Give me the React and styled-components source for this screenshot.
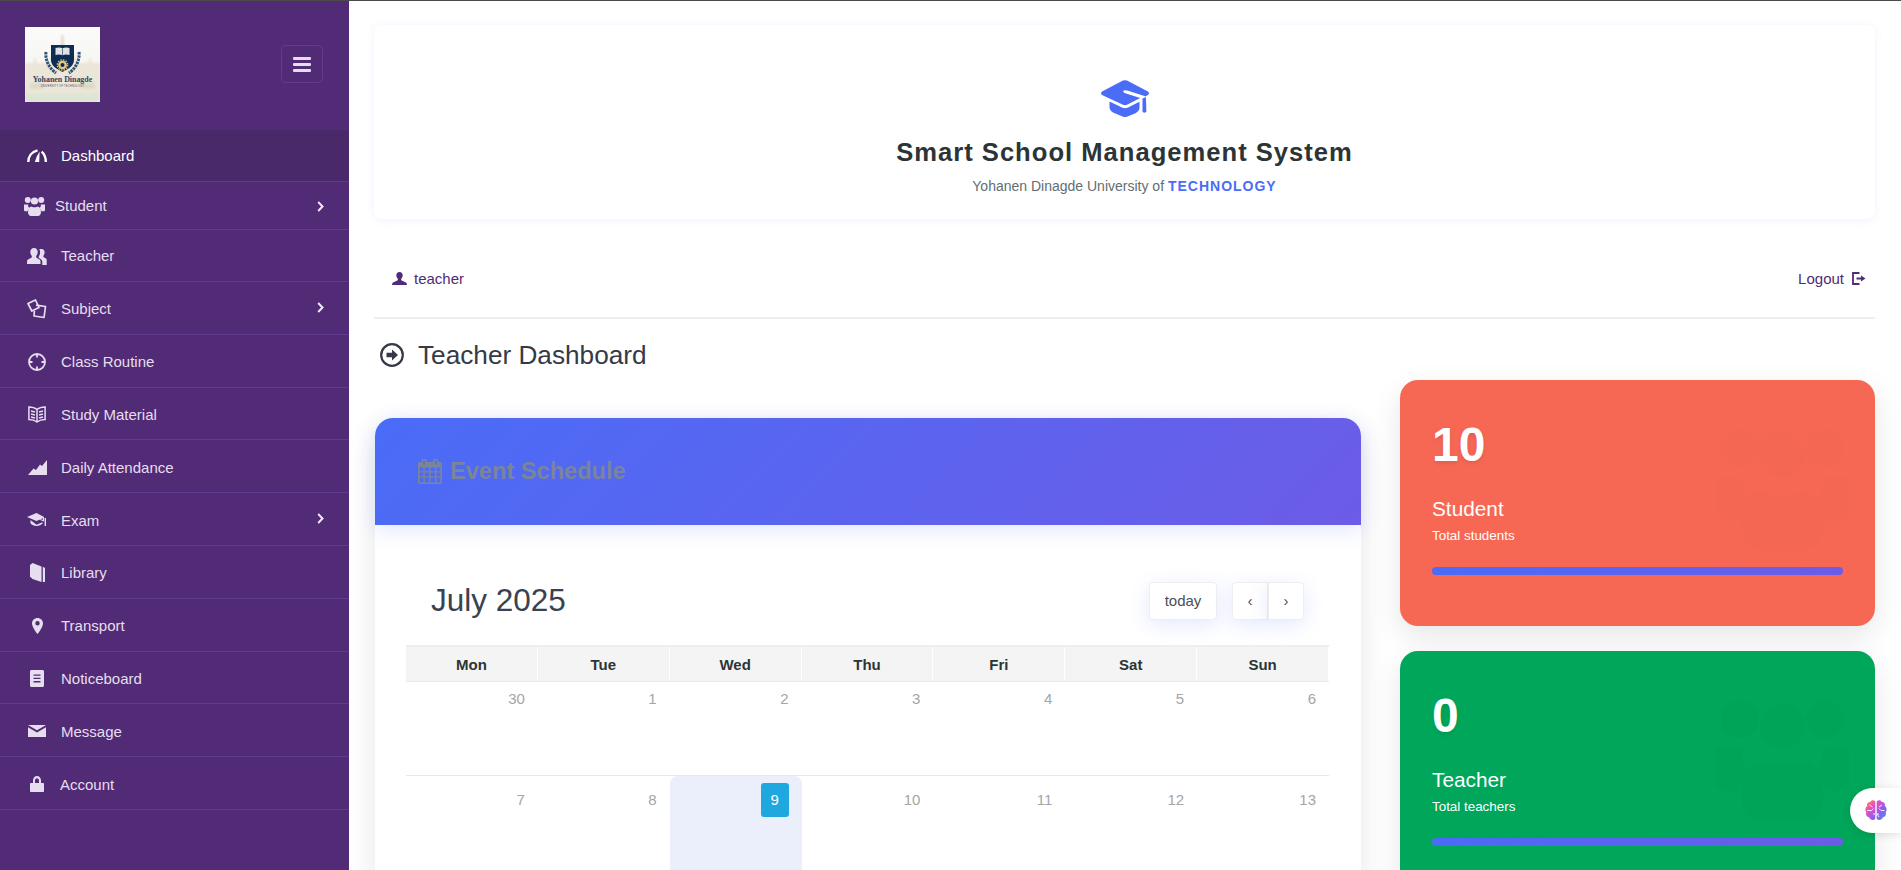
import React from "react";
import styled, { createGlobalStyle } from "styled-components";

const Global = createGlobalStyle`
  html, body { margin: 0; padding: 0; background: #fff; }
  body { font-family: "Liberation Sans", Arial, sans-serif; overflow: hidden; }
  * { box-sizing: border-box; }
`;

const Page = styled.div`
  display: flex; width: 1901px; height: 870px; overflow: hidden;
  border-top: 1px solid #4a4a4a; position: relative; background: #fff;
`;
const Sidebar = styled.aside`
  width: 349px; flex: none; background: #522b76; display: flex; flex-direction: column;
`;
const Brand = styled.div`
  height: 129px; flex: none; display: flex; align-items: flex-start; justify-content: space-between;
  padding: 26px 26px 0 25px; border-bottom: 1px solid #4b3468;
`;
const Logo = styled.svg`width: 75px; height: 75px; display: block;`;
const Toggle = styled.button`
  width: 42px; height: 38px; margin-top: 18px; background: transparent; border: 1px solid #633c8a; border-radius: 4px;
  padding: 0; display: flex; flex-direction: column; align-items: center; justify-content: center; gap: 3px;
`;
const ToggleBar = styled.span`width: 18px; height: 3px; border-radius: 1px; background: #e6deef;`;
const Menu = styled.nav`display: flex; flex-direction: column;`;
const Row = styled.div`
  display: flex; align-items: center; height: ${p => p.$h}px; flex: none;
  padding: ${p => p.$nudge}px 25px 0 ${p => p.$pad}px; gap: ${p => p.$gap}px;
  border-bottom: 1px solid #603a8c;
  background: ${p => p.$active ? "#49296a" : "transparent"};
  color: ${p => p.$active ? "#fff" : "#e6deef"};
  font-size: 15px;
`;
const RowIcon = styled.span`
  width: ${p => p.$w}px; flex: none; display: flex; justify-content: center; align-items: center;
`;
const RowLabel = styled.span`flex: 1;`;
const Chevron = styled.svg`width: 7px; height: 11px; display: block; margin-top: ${p => p.$mt}px;`;

const Main = styled.main`flex: 1; padding: 24px 26px 0 25px; display: flex; flex-direction: column; min-width: 0;`;
const Banner = styled.header`
  height: 194px; flex: none; border-radius: 8px; background: #fff; box-shadow: 0 1px 8px rgba(74,108,247,.09);
  display: flex; flex-direction: column; align-items: center; padding-top: 55px;
`;
const CapIcon = styled.svg`width: 48px; height: 37px; display: block; color: #4a6cf7;`;
const BannerTitle = styled.h1`
  margin: 20px 0 0; font-size: 25.6px; line-height: 30px; font-weight: 700; letter-spacing: 1px; color: #2d3436;
`;
const BannerSub = styled.p`margin: 10px 0 0; font-size: 14px; line-height: 18px; color: #636e72;`;
const Tech = styled.span`color: #4a6cf7; font-weight: 700; letter-spacing: 1px;`;
const UserBar = styled.div`
  height: 100px; flex: none; display: flex; align-items: center; justify-content: space-between;
  padding: 20px 9px 0 18px; border-bottom: 2px solid #eeeeee; color: #522b76; font-size: 15px;
`;
const UserBit = styled.div`display: flex; align-items: center; gap: ${p => p.$gap}px;`;
const PageTitle = styled.h2`
  margin: 0; height: 61px; flex: none; display: flex; align-items: center; gap: 14px; padding: 11px 0 0 6px;
  font-size: 26.2px; font-weight: 400; color: #343a46;
`;
const Columns = styled.div`display: grid; grid-template-columns: 987px 475px; column-gap: 39px; align-items: start;`;
const EventCard = styled.section`
  margin: 38px 0 0 1px; background: #fff; border-radius: 18px 18px 0 0; box-shadow: 0 10px 30px rgba(0,0,0,.1);
`;
const EventHead = styled.div`
  height: 107px; border-radius: 18px 18px 0 0; background: linear-gradient(135deg, #4a6cf7, #6c5ce7);
  box-shadow: 0 5px 20px rgba(74,108,247,.16); display: flex; align-items: center; gap: 8px; padding-left: 43px;
  position: relative;
`;
const EventTitle = styled.h3`margin: 0; font-size: 23.6px; font-weight: 700; color: #7b8598;`;
const CalBody = styled.div`padding: 57px 32px 0 31px;`;
const CalTool = styled.div`display: flex; align-items: center; justify-content: space-between; padding: 0 25px 0 25px; height: 37px; margin-bottom: 26px;`;
const CalMonth = styled.div`font-size: 31.5px; color: #3a4250;`;
const CalBtns = styled.div`display: flex; gap: 15px;`;
const CalBtn = styled.button`
  height: 38px; padding: 0; width: ${p => p.$w}px; background: #fff; border: 1px solid #eeeeee;
  border-radius: ${p => p.$r};
  box-shadow: 0 5px 20px rgba(74,108,247,.15); font: 15px "Liberation Sans", sans-serif; color: #495057;
`;
const BtnGroup = styled.div`display: flex;`;
const HeadRow = styled.div`
  display: grid; grid-template-columns: repeat(7, 1fr); border-top: 2px solid #eeeeee; border-bottom: 1px solid #e8e8e8;
`;
const HeadCell = styled.div`
  height: 34px; background: #f4f4f4; border-right: 1px solid #fff; display: flex; align-items: center; justify-content: center;
  font-size: 15px; font-weight: 700; color: #2d3436;
`;
const WeekRow = styled.div`
  display: grid; grid-template-columns: repeat(7, 1fr); height: ${p => p.$h}px;
  border-bottom: ${p => p.$line ? "1px solid #e8e8e8" : "0"};
`;
const DayCell = styled.div`
  padding: ${p => p.$top}px 13px 0 0; display: flex; justify-content: flex-end; align-items: flex-start;
  background: ${p => p.$today ? "#ebeffc" : "transparent"};
  border-radius: ${p => p.$today ? "8px 8px 0 0" : "0"};
  font-size: 15px; color: #a5a5a5; line-height: 18px;
`;
const TodayBadge = styled.span`
  width: 28px; height: 34px; border-radius: 3px; background: #1fa8e0; color: #fff;
  display: flex; align-items: center; justify-content: center;
`;
const Stats = styled.div`display: flex; flex-direction: column; gap: 25px;`;
const Stat = styled.section`
  position: relative; height: 246px; border-radius: 18px; padding: 37px 32px 0 32px; color: #fff;
  background: ${p => p.$bg}; box-shadow: 0 10px 30px rgba(0,0,0,.1);
`;
const StatNum = styled.div`font-size: 48px; line-height: 55px; font-weight: 700; text-shadow: 0 2px 4px rgba(0,0,0,.1);`;
const StatLabel = styled.div`margin-top: 25px; font-size: 20.8px; line-height: 24px;`;
const StatSub = styled.div`margin-top: 7px; font-size: 13.4px; line-height: 16px;`;
const StatBar = styled.div`
  margin-top: 23px; height: 8px; border-radius: 4px; background: linear-gradient(90deg, #4a6cf7, #6c5ce7);
`;
const Watermark = styled.svg`
  position: absolute; right: 25px; top: 43px; width: 135px; height: 127px; color: #000; opacity: .005;
`;
const Float = styled.button`
  position: absolute; right: 0; top: 787px; width: 51px; height: 45px; border: 0; border-radius: 23px 0 0 23px;
  background: #fff; box-shadow: 0 2px 10px rgba(0,0,0,.12); display: flex; align-items: center; padding: 0 0 0 14px;
`;

const ICONS = {
  gauge: <svg width="20" height="13" viewBox="0 0 20 13" fill="none" stroke="currentColor"><path d="M1.3 13C1.3 7.5 4.5 2.8 10.5 1.4" strokeWidth="2.4"/><path d="M14.6 2.6C17 4.5 18.8 8 18.8 13" strokeWidth="2.4"/><path d="M12.6 2.5 9.8 7.5 7.8 13h4.4Z" fill="currentColor" stroke="none"/></svg>,
  users: <svg width="21" height="20" viewBox="0 0 21 20" fill="currentColor"><circle cx="3.8" cy="4" r="3"/><circle cx="17.2" cy="4" r="3"/><circle cx="10.5" cy="5" r="3.6"/><path d="M0 8.500h4.200c-.3 1.600.4 3 1.500 3.800-1.200.8-2 2-2 3H1.500C.6 15.300 0 14.700 0 14ZM21 8.500h-4.200c.3 1.600-.4 3-1.500 3.800 1.200.8 2 2 2 3h2.200c.9 0 1.500-.6 1.500-1.300Z"/><path d="M7 10.500c1 1 6 1 7 0 1.800.6 3 2.500 3 5.500 0 2.500-1.500 4-3 4H7c-1.500 0-3-1.500-3-4 0-3 1.200-4.900 3-5.500Z"/></svg>,
  teacher: <svg width="20" height="18" viewBox="0 0 20 18" fill="currentColor"><path d="M7 1c2.400 0 3.700 1.800 3.700 4 0 1.700-.8 3-1.500 3.900v1.500l3.300 2.100c.8.500 1 1 1 2.500v2H0v-2c0-1.500.3-2 1-2.500l3.800-2.100V8.900C4.100 8 3.300 6.700 3.300 5 3.300 2.800 4.600 1 7 1Z"/><path d="M14.500 2c2 0 3.100 1.500 3.100 3.500 0 1.400-.6 2.500-1.200 3.200v1.200l2.500 1.600c.6.400.8.800.8 2V18h-4.400v-2.500c0-1.700-.5-2.600-1.500-3.200l-2-1.200V9.400c.7-1 1.300-2.500 1.300-4.200 0-1.200-.3-2.200-.8-2.900.5-.2 1.100-.3 2-.3Z"/></svg>,
  subject: <svg width="20" height="20" viewBox="0 0 20 20" fill="none" stroke="currentColor" strokeWidth="1.700" strokeLinejoin="round"><path d="M1 4.500 8.500 1 12 8.500 4.800 12Z"/><path d="M9 6.200 18.500 7.500 17 18.500 7 17 7.400 12"/></svg>,
  target: <svg width="18" height="18" viewBox="0 0 18 18" fill="none" stroke="currentColor" strokeWidth="1.800"><circle cx="9" cy="9" r="8"/><path d="M9 1v3.500M9 13.500V17M1 9h3.500M13.500 9H17"/></svg>,
  book: <svg width="18" height="17" viewBox="0 0 18 17" fill="none" stroke="currentColor" strokeWidth="1.500"><path d="M9 3.500C7 1.800 3.500 1 .9 1v12.500c2.600 0 6 .8 8.100 2.500 2.100-1.700 5.500-2.500 8.100-2.500V1C14.500 1 11 1.800 9 3.500ZM9 3.500V16"/><path d="M3 5l4 1M3 8l4 1M3 11l4 1M15 5l-4 1M15 8l-4 1M15 11l-4 1"/></svg>,
  chart: <svg width="19" height="15" viewBox="0 0 19 15" fill="currentColor"><path d="M0 15 5.500 8.500 8 10 12 4.500 14 6 19 0v15Z"/></svg>,
  cap: <svg width="20" height="14" viewBox="0 0 20 14" fill="currentColor"><path d="M9.500 0 0 4l9.500 4 6.500-2.700v1.500L9.500 5.500l7.500 3V4L9.500 0Z"/><path d="M3.500 7v3.500c1.500 1.500 3.700 2.500 6 2.500s4.500-1 6-2.500V9.300L9.500 11.700 3.500 7Z"/><rect x="17.600" y="5" width="1.400" height="8"/></svg>,
  library: <svg width="15" height="19" viewBox="0 0 15 19" fill="currentColor"><path d="M0 2 2.500 0l9 3.500V19L2.500 16 0 13.500Z"/><path d="M12.800 3.800 15 5v14h-2.200Z" /></svg>,
  pin: <svg width="11" height="16" viewBox="0 0 11 16" fill="currentColor"><path fillRule="evenodd" d="M5.500 0C2.500 0 0 2.400 0 5.400 0 9 5.500 16 5.500 16S11 9 11 5.400C11 2.400 8.500 0 5.500 0Zm0 7.500a2.200 2.200 0 1 1 0-4.400 2.200 2.200 0 0 1 0 4.400Z"/></svg>,
  note: <svg width="14" height="17" viewBox="0 0 14 17" fill="currentColor"><path fillRule="evenodd" d="M1.500 0h11c.8 0 1.500.7 1.500 1.500v14c0 .8-.7 1.500-1.500 1.500h-11C.7 17 0 16.300 0 15.500v-14C0 .7.700 0 1.500 0ZM3.500 4.500v1.300h7V4.500Zm0 3.300v1.300h7V7.800Zm0 3.300v1.300h7v-1.300Z"/></svg>,
  mail: <svg width="18" height="12" viewBox="0 0 18 12" fill="currentColor"><path d="M0 0h18L9 5.200Z"/><path d="M0 2.200 9 7.500l9-5.300V12H0Z"/></svg>,
  lock: <svg width="14" height="16" viewBox="0 0 14 16" fill="currentColor"><path fillRule="evenodd" d="M3 7V4.500C3 2 4.800 0 7 0s4 2 4 4.500V7h2c.6 0 1 .4 1 1v7c0 .6-.4 1-1 1H1c-.6 0-1-.4-1-1V8c0-.6.4-1 1-1Zm2 0h4V4.500C9 3.200 8.100 2.200 7 2.200S5 3.200 5 4.500Z"/></svg>,
};

const MENU = [
  { label: "Dashboard", icon: "gauge", h: 52, pad: 27, w: 20, gap: 14, nudge: 0, active: true },
  { label: "Student", icon: "users", h: 48, pad: 24, w: 21, gap: 10, nudge: 0, chev: 2 },
  { label: "Teacher", icon: "teacher", h: 52, pad: 27, w: 20, gap: 14, nudge: 0 },
  { label: "Subject", icon: "subject", h: 52.8, pad: 27, w: 20, gap: 14, nudge: 2, chev: -2 },
  { label: "Class Routine", icon: "target", h: 52.8, pad: 27, w: 20, gap: 14, nudge: 2 },
  { label: "Study Material", icon: "book", h: 52.8, pad: 27, w: 20, gap: 14, nudge: 2 },
  { label: "Daily Attendance", icon: "chart", h: 52.8, pad: 27, w: 20, gap: 14, nudge: 2 },
  { label: "Exam", icon: "cap", h: 52.8, pad: 27, w: 20, gap: 14, nudge: 2, chev: -4 },
  { label: "Library", icon: "library", h: 52.8, pad: 27, w: 20, gap: 14, nudge: 2 },
  { label: "Transport", icon: "pin", h: 52.8, pad: 27, w: 20, gap: 14, nudge: 2 },
  { label: "Noticeboard", icon: "note", h: 52.8, pad: 27, w: 20, gap: 14, nudge: 2 },
  { label: "Message", icon: "mail", h: 52.8, pad: 27, w: 20, gap: 14, nudge: 2 },
  { label: "Account", icon: "lock", h: 52.8, pad: 27, w: 20, gap: 13, nudge: 2 },
];

const SchoolLogo = () => (
  <Logo viewBox="0 0 75 75">
    <defs>
      <filter id="soft"><feGaussianBlur stdDeviation="1.100" /></filter>
      <linearGradient id="sky" x1="0" y1="0" x2="0" y2="1"><stop offset="0" stopColor="#fbfbfa" /><stop offset="1" stopColor="#f0efe9" /></linearGradient>
    </defs>
    <rect width="75" height="75" fill="url(#sky)" />
    <g filter="url(#soft)">
      <path d="M0 36h8l2-6 2 6h12l2-8h24l2 8h10l3-5 3 5h7v32H0Z" fill="#ebe6d8" />
      <path d="M35 25l1.500-17h2L40 25Z" fill="#e0dccf" />
      <rect y="66" width="75" height="9" fill="#dfe5d6" />
      <rect x="5" y="56" width="14" height="6" fill="#dfd9c8" />
      <rect x="56" y="56" width="14" height="6" fill="#dfd9c8" />
    </g>
    <g fill="none" stroke="#2f5078" strokeWidth="3" strokeDasharray="2.500 .8">
      <path d="M21 25c-1 8 3 16 10 21" />
      <path d="M54 25c1 8-3 16-10 21" />
    </g>
    <path d="M26 18h23v15c0 6-6 9-11.500 12C32 42 26 39 26 33Z" fill="#0d2d55" />
    <path d="M30.500 21c2-.8 5-.8 7 .3 2-1.100 5-1.100 7-.3v7c-2-.8-5-.8-7 .3-2-1.100-5-1.100-7-.3Z" fill="#dfe3e6" />
    <path d="M37.500 21.300v7" stroke="#0d2d55" strokeWidth=".6" />
    <circle cx="37.500" cy="38" r="3.200" fill="none" stroke="#e5c87a" strokeWidth="2.400" />
    <circle cx="37.500" cy="38" r="5.200" fill="none" stroke="#e5c87a" strokeWidth="1.300" strokeDasharray="1.500 1.200" />
    <text x="37.500" y="54.800" textAnchor="middle" fontFamily="Liberation Serif, serif" fontWeight="700" fontSize="7.900" fill="#2b4666">Yohanen Dinagde</text>
    <text x="37.500" y="59.500" textAnchor="middle" fontFamily="Liberation Sans, sans-serif" fontSize="2.600" letterSpacing=".2" fill="#3b4f68">UNIVERSITY OF TECHNOLOGY</text>
  </Logo>
);

const ChevronIcon = ({ mt }) => (
  <Chevron $mt={mt} viewBox="0 0 7 11" fill="none" stroke="#f0eaf7" strokeWidth="2"><path d="M1.200 1 5.500 5.500 1.200 10" /></Chevron>
);

const WEEKS = [
  { top: 8, h: 94, line: true, days: [30, 1, 2, 3, 4, 5, 6] },
  { top: 15, h: 110, line: false, days: [7, 8, 9, 10, 11, 12, 13] },
];
const DAYS = ["Mon", "Tue", "Wed", "Thu", "Fri", "Sat", "Sun"];

const UsersMark = () => (
  <Watermark viewBox="0 0 21 20" fill="currentColor">{ICONS.users.props.children}</Watermark>
);

const StatCard = ({ bg, num, label, sub }) => (
  <Stat $bg={bg}>
    <UsersMark />
    <StatNum>{num}</StatNum>
    <StatLabel>{label}</StatLabel>
    <StatSub>{sub}</StatSub>
    <StatBar />
  </Stat>
);

export default function App() {
  return (
    <Page>
      <Global />
      <Sidebar>
        <Brand>
          <SchoolLogo />
          <Toggle aria-label="Toggle menu"><ToggleBar /><ToggleBar /><ToggleBar /></Toggle>
        </Brand>
        <Menu>
          {MENU.map(m => (
            <Row key={m.label} $h={m.h} $pad={m.pad} $gap={m.gap} $nudge={m.nudge} $active={m.active}>
              <RowIcon $w={m.w}>{ICONS[m.icon]}</RowIcon>
              <RowLabel>{m.label}</RowLabel>
              {m.chev !== undefined && <ChevronIcon mt={m.chev} />}
            </Row>
          ))}
        </Menu>
      </Sidebar>
      <Main>
        <Banner>
          <CapIcon viewBox="0 0 48 37" fill="currentColor">
            <path fillRule="evenodd" d="M22 .6a5 5 0 0 1 4 0l20.500 10.600c2 1.100 2 3 0 4.100l-2.200 1.200v-.2L27 10.800c-1-.4-2-.6-3.200-.5-1.900.2-2.100 2.100-.3 2.700l15.700 5.100L26 24.800a5 5 0 0 1-4 0L1.500 15.300c-2-1.100-2-3 0-4.100Z" />
            <path d="M8.500 21.500 21 27.500a7 7 0 0 0 6 0l11.500-5.800v5.800c0 2.500-1.500 4-3.500 5.500L26.500 36.500a6 6 0 0 1-5 0L12 32.500c-2-1.200-3.500-3-3.500-5.500Z" />
            <path d="M41.500 18.500 44.800 17c.4 5 .5 11 .5 14.500 0 1.500-3.800 1.500-3.800 0Z" />
          </CapIcon>
          <BannerTitle>Smart School Management System</BannerTitle>
          <BannerSub>Yohanen Dinagde University of <Tech>TECHNOLOGY</Tech></BannerSub>
        </Banner>
        <UserBar>
          <UserBit $gap={7}>
            <svg width="15" height="13" viewBox="0 0 15 13" fill="#522b76"><path d="M7.500 0c2 0 3.200 1.400 3.200 3.300 0 1.500-.7 2.800-1.500 3.500v1.400l4.300 2c.8.400 1.500 1.100 1.500 2.800H0c0-1.700.7-2.400 1.500-2.800l4.300-2V6.800C5 6.100 4.300 4.800 4.300 3.300 4.300 1.400 5.500 0 7.500 0Z" /></svg>
            teacher
          </UserBit>
          <UserBit $gap={8}>
            Logout
            <svg width="14" height="13" viewBox="0 0 14 13" fill="none" stroke="#522b76"><path d="M7.500 1H1v11h6.500" strokeWidth="1.800" /><path d="M4.500 6.500h5" strokeWidth="2" /><path d="M9 3.500 13.500 6.500 9 9.500Z" fill="#522b76" stroke="none" /></svg>
          </UserBit>
        </UserBar>
        <PageTitle>
          <svg width="24" height="24" viewBox="0 0 24 24" fill="none" stroke="#343a46"><circle cx="12" cy="12" r="10.800" strokeWidth="2.200" /><path d="M6.500 9.700h5.500V6.500l6 5.500-6 5.500v-3.200H6.500Z" fill="#343a46" stroke="none" /></svg>
          Teacher Dashboard
        </PageTitle>
        <Columns>
          <EventCard>
            <EventHead>
              <svg width="24" height="25" viewBox="0 0 24 25" fill="#7b8598"><path fillRule="evenodd" d="M5 0h2.500c.8 0 1.300.6 1.300 1.300V3h6.400V1.300c0-.7.500-1.300 1.300-1.300H19c.8 0 1.300.6 1.300 1.300V3h2c.9 0 1.700.8 1.700 1.700v18.600c0 .9-.8 1.700-1.700 1.700H1.700C.8 25 0 24.200 0 23.300V4.700C0 3.800.8 3 1.700 3h2V1.300C3.700.6 4.200 0 5 0Zm.2 1.500V5.500h1.600V1.500Zm12 0V5.500h1.600V1.500ZM1.600 8.500v3.700h3.900V8.500Zm5.200 0v3.700h4.400V8.500Zm5.800 0v3.700H17V8.500Zm5.800 0v3.700h3.900V8.500ZM1.600 13.500v3.700h3.900v-3.700Zm5.200 0v3.700h4.400v-3.700Zm5.800 0v3.700H17v-3.700Zm5.800 0v3.700h3.900v-3.700ZM1.600 18.500v4.900h3.900v-4.900Zm5.200 0v4.900h4.400v-4.900Zm5.800 0v4.900H17v-4.900Zm5.800 0v4.900h3.900v-4.900Z" /></svg>
              <EventTitle>Event Schedule</EventTitle>
            </EventHead>
            <CalBody>
              <CalTool>
                <CalMonth>July 2025</CalMonth>
                <CalBtns>
                  <CalBtn $w={68} $r="4px">today</CalBtn>
                  <BtnGroup>
                    <CalBtn $w={36} $r="4px 0 0 4px">‹</CalBtn>
                    <CalBtn $w={36} $r="0 4px 4px 0">›</CalBtn>
                  </BtnGroup>
                </CalBtns>
              </CalTool>
              <HeadRow>{DAYS.map(d => <HeadCell key={d}>{d}</HeadCell>)}</HeadRow>
              {WEEKS.map(w => (
                <WeekRow key={w.days[0]} $h={w.h} $line={w.line}>
                  {w.days.map(d => d === 9
                    ? <DayCell key={d} $top={7} $today><TodayBadge>{d}</TodayBadge></DayCell>
                    : <DayCell key={d} $top={w.top}>{d}</DayCell>)}
                </WeekRow>
              ))}
            </CalBody>
          </EventCard>
          <Stats>
            <StatCard bg="#f66854" num="10" label="Student" sub="Total students" />
            <StatCard bg="#00a65a" num="0" label="Teacher" sub="Total teachers" />
          </Stats>
        </Columns>
      </Main>
      <Float aria-label="Assistant">
        <svg width="24" height="24" viewBox="0 0 24 24">
          <defs><linearGradient id="brain" x1="0" y1="0" x2="1" y2="1"><stop offset="0" stopColor="#f59e2c" /><stop offset=".3" stopColor="#ec4fc0" /><stop offset=".65" stopColor="#8f5cf0" /><stop offset="1" stopColor="#3b9bf7" /></linearGradient></defs>
          <path d="M11.300 2.500C10 .8 7 1 6.200 3 3.800 3 2.500 5.200 3.200 7 1 8.500 .8 11.500 2.300 13c-1 2.500.5 5 2.800 5.300.5 2.500 4.500 4 6.200 1.500ZM12.700 2.500C14 .8 17 1 17.800 3c2.400 0 3.700 2.200 3 4 2.200 1.500 2.400 4.500.9 6 1 2.500-.5 5-2.800 5.300-.5 2.500-4.500 4-6.200 1.500Z" fill="url(#brain)" />
          <path d="M3 11.500h4.500l2-2M5.500 6l3 2M9 15h2M20.500 11.500H17l-2-2M18 6l-3 2M15 15h-2l2 3" stroke="#fff" strokeWidth=".9" fill="none" />
        </svg>
      </Float>
    </Page>
  );
}
